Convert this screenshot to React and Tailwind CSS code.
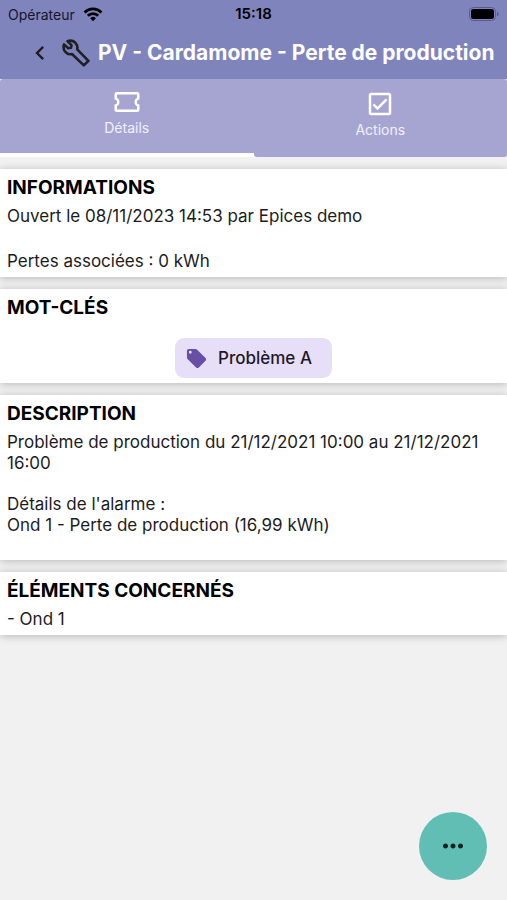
import React from 'react';
import { MdChevronLeft, MdMoreHoriz } from 'react-icons/md';

const TicketIcon = ({ className }) => (
    <svg viewBox="0 0 24 24" fill="currentColor" className={className} aria-hidden="true">
        <path d="M4,4A2,2 0 0,0 2,6V10A2,2 0 0,1 4,12A2,2 0 0,1 2,14V18A2,2 0 0,0 4,20H20A2,2 0 0,0 22,18V14A2,2 0 0,1 20,12A2,2 0 0,1 22,10V6A2,2 0 0,0 20,4H4M4,6H20V8.54C18.76,9.25 18,10.57 18,12C18,13.43 18.76,14.75 20,15.46V18H4V15.46C5.24,14.75 6,13.43 6,12C6,10.57 5.24,9.25 4,8.54V6Z" />
    </svg>
);

const CheckboxIcon = ({ className }) => (
    <svg viewBox="0 0 24 24" fill="currentColor" className={className} aria-hidden="true">
        <path d="M19,3H5A2,2 0 0,0 3,5V19A2,2 0 0,0 5,21H19A2,2 0 0,0 21,19V5A2,2 0 0,0 19,3M19,5V19H5V5H19M10,17L6,13L7.41,11.58L10,14.17L16.59,7.58L18,9" />
    </svg>
);

const TagIcon = ({ className }) => (
    <svg viewBox="0 0 24 24" fill="currentColor" className={className} aria-hidden="true">
        <path d="M5.5,7A1.5,1.5 0 0,1 4,5.5A1.5,1.5 0 0,1 5.5,4A1.5,1.5 0 0,1 7,5.5A1.5,1.5 0 0,1 5.5,7M21.41,11.58L12.41,2.58C12.05,2.22 11.55,2 11,2H4C2.89,2 2,2.89 2,4V11C2,11.55 2.22,12.05 2.59,12.41L11.58,21.41C11.95,21.77 12.45,22 13,22C13.55,22 14.05,21.77 14.41,21.41L21.41,14.41C21.78,14.05 22,13.55 22,13C22,12.44 21.77,11.94 21.41,11.58Z" />
    </svg>
);

const WrenchIcon = ({ className }) => (
    <svg viewBox="0 0 28 28" fill="none" stroke="currentColor" strokeWidth="2.6" strokeLinejoin="round" className={className} aria-hidden="true">
        <path d="M5.5 2.2L9.5 6.2L9 8.8L6.2 9.3L2 5.4C1 8.5 1.8 11.5 4 13.4C6 15.2 8 15.6 10 15L21.8 26.4L26.4 21.8L15.2 10.4C15.8 8.2 15.2 5.8 13.4 3.8C11.3 1.8 8.4 1.2 5.5 2.2Z" />
    </svg>
);

const WifiIcon = ({ className }) => (
    <svg viewBox="0 0 20 15" fill="none" stroke="currentColor" strokeWidth="2.8" className={className} aria-hidden="true">
        <path d="M1.6 5.4a12 12 0 0 1 16.8 0" />
        <path d="M4.8 8.8a7.4 7.4 0 0 1 10.4 0" />
        <path d="M10 14.2l-2.9-3a4.2 4.2 0 0 1 5.8 0z" fill="currentColor" stroke="none" />
    </svg>
);

const BatteryIcon = ({ className }) => (
    <svg viewBox="0 0 30 14" className={className} aria-hidden="true">
        <rect x="0.5" y="0.5" width="26" height="13" rx="4" fill="none" stroke="#5a5c88" />
        <rect x="2" y="2" width="23" height="10" rx="2.5" fill="#000" />
        <path d="M28 4.8c1.2.4 1.8 1.2 1.8 2.2s-.6 1.8-1.8 2.2z" fill="#5a5c88" />
    </svg>
);

const StatusBar = () => (
    <div className="grid grid-cols-3 items-center h-7 px-2 text-[14px] text-[#15162a]">
        <div className="flex items-center gap-2">
            <span>Opérateur</span>
            <WifiIcon className="w-5 h-[15px] text-black" />
        </div>
        <span className="text-center text-[15px] font-semibold text-black">15:18</span>
        <BatteryIcon className="w-[30px] h-3.5 justify-self-end" />
    </div>
);

const Card = ({ title, children, className = 'pb-[5px]' }) => (
    <section className={`bg-white px-[7px] pt-[5px] shadow-[0_1px_8px_rgba(0,0,0,0.25)] ${className}`}>
        <h2 className="text-[19px] leading-7 font-bold text-black">{title}</h2>
        {children}
    </section>
);

const App = () => {
    return (
        <div className="min-h-screen bg-[#f1f1f1] font-['Inter',sans-serif] text-[#1c1c1e]">
            <header className="bg-[#8084bc]">
                <StatusBar />
                <div className="flex items-center h-[51px] pl-[26px] pb-0.5">
                    <button type="button" aria-label="Retour" className="shrink-0 mr-2">
                        <MdChevronLeft className="size-7 text-[#1c1c1e]" />
                    </button>
                    <WrenchIcon className="size-7 shrink-0 mr-2 text-[#1f2023]" />
                    <h1 className="text-[21px] font-bold text-white whitespace-nowrap">
                        PV - Cardamome - Perte de production
                    </h1>
                </div>
            </header>

            {/* Tabs */}
            <nav className="grid grid-cols-2 h-[78px] mb-3 text-[14px] leading-[22px] text-[#f1f0fb]">
                <button type="button" className="flex flex-col items-center pt-2 rounded-tl-[3px] bg-[#a6a5d1] border-b-4 border-white">
                    <TicketIcon className="size-[30px] text-white" />
                    <span>Détails</span>
                </button>
                <button type="button" className="flex flex-col items-center pt-2.5 rounded-r-[3px] rounded-bl-[3px] bg-[#a6a5d1]">
                    <CheckboxIcon className="size-[30px] text-white" />
                    <span>Actions</span>
                </button>
            </nav>

            <main className="flex flex-col gap-3 text-[17px] leading-[21px]">
                <Card title="INFORMATIONS">
                    <p className="mt-1">Ouvert le 08/11/2023 14:53 par Epices demo</p>
                    <p className="mt-6">Pertes associées : 0 kWh</p>
                </Card>

                <Card title="MOT-CLÉS">
                    <div className="flex justify-center mt-4">
                        <span className="flex items-center gap-2.5 h-10 pl-2.5 pr-5 rounded-[9px] bg-[#e7dff8] font-medium text-[#1d192b]">
                            <TagIcon className="size-[23px] text-[#6750a4]" />
                            Problème A
                        </span>
                    </div>
                </Card>

                <Card title="DESCRIPTION" className="pb-6">
                    <p className="mt-1">Problème de production du 21/12/2021 10:00 au 21/12/2021 16:00</p>
                    <p className="mt-5">
                        Détails de l'alarme :<br />
                        Ond 1 - Perte de production (16,99 kWh)
                    </p>
                </Card>

                <Card title="ÉLÉMENTS CONCERNÉS">
                    <p className="mt-1">- Ond 1</p>
                </Card>
            </main>

            <button
                type="button"
                aria-label="Plus d'options"
                className="fixed right-5 bottom-5 flex items-center justify-center size-[68px] rounded-full bg-[#60beb5]"
            >
                <MdMoreHoriz className="size-[30px] text-[#10201f]" />
            </button>
        </div>
    );
};

export default App;
